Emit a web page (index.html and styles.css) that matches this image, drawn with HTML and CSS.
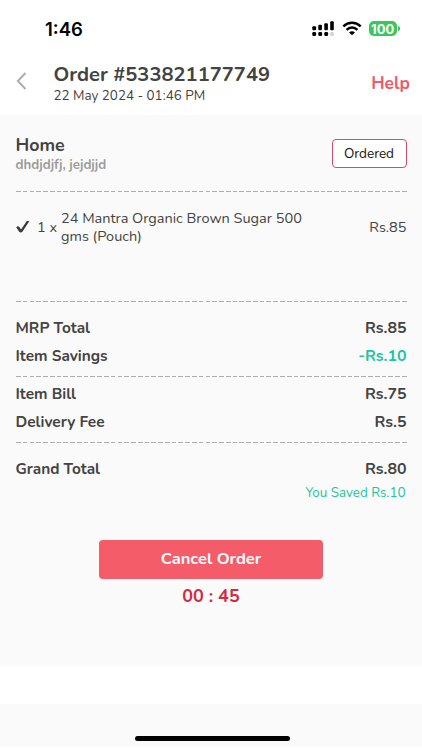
FILE: index.html
```
<!DOCTYPE html>
<html lang="en">
<head>
<meta charset="utf-8">
<title>Order details</title>
<link rel="stylesheet" href="styles.css">
</head>
<body>
<div class="screen">
  <div class="status">
    <span class="clock">1:46</span>
    <div class="indicators">
      <svg class="signal" width="23" height="16" viewBox="0 0 23 16">
        <g fill="#000">
          <rect x="0.3" y="5.2" width="3.8" height="4" rx="1"/>
          <rect x="6.3" y="3.8" width="3.6" height="5.4" rx="1"/>
          <rect x="12.3" y="2.2" width="3.6" height="7" rx="1"/>
          <rect x="18.2" y="0.2" width="3.6" height="9" rx="1"/>
          <rect x="0.3" y="11" width="3.8" height="4" rx="1.2"/>
          <rect x="6.3" y="11" width="3.8" height="4" rx="1.2"/>
          <rect x="12.3" y="11" width="3.8" height="4" rx="1.2"/>
        </g>
        <rect x="18.2" y="11" width="3.6" height="4" rx="1.2" fill="#d2d2d2"/>
      </svg>
      <svg class="wifi" width="20" height="15" viewBox="0 0 20 15">
        <g fill="none" stroke="#000" stroke-width="2.5">
          <path d="M1.3 5.4Q5.2 1.8 10 1.8T18.7 5.4"/>
          <path d="M4.5 8.8Q7 6.5 10 6.5T15.5 8.8"/>
        </g>
        <path d="M7 11.4Q10 9 13 11.4L10 14.3Z" fill="#000"/>
      </svg>
      <div class="battery"><span class="level">100</span><span class="cap"></span></div>
    </div>
  </div>

  <header class="header">
    <svg class="back" width="12" height="18" viewBox="0 0 12 18"><path d="M9.5 1L1.8 9L9.5 17" fill="none" stroke="#adadad" stroke-width="2"/></svg>
    <div class="heading">
      <h1 class="title">Order #533821177749</h1>
      <p class="date">22 May 2024 - 01:46 PM</p>
    </div>
    <a class="help">Help</a>
  </header>

  <main class="content">
    <section class="address">
      <div>
        <h2 class="place">Home</h2>
        <p class="street">dhdjdjfj, jejdjjd</p>
      </div>
      <span class="badge">Ordered</span>
    </section>
    <div class="dash"></div>

    <section class="item">
      <svg class="check" width="14" height="13" viewBox="0 0 14 13"><path d="M0.2 7.2Q1.8 5.4 3.2 6.8L5 9.4L10.8 0.9H13.4L6.6 11.4Q4.7 13.3 3 11.5Z" fill="#3a3a3a"/></svg>
      <span class="qty">1 x</span>
      <p class="name">24 Mantra Organic Brown Sugar 500<br>gms (Pouch)</p>
      <span class="price">Rs.85</span>
    </section>
    <div class="dash"></div>

    <dl class="rows rows-first">
      <div class="row"><dt>MRP Total</dt><dd>Rs.85</dd></div>
      <div class="row"><dt>Item Savings</dt><dd class="saving">-Rs.10</dd></div>
    </dl>
    <div class="dash"></div>
    <dl class="rows rows-second">
      <div class="row"><dt>Item Bill</dt><dd>Rs.75</dd></div>
      <div class="row"><dt>Delivery Fee</dt><dd>Rs.5</dd></div>
    </dl>
    <div class="dash"></div>
    <dl class="rows rows-total">
      <div class="row"><dt>Grand Total</dt><dd>Rs.80</dd></div>
    </dl>
    <p class="saved">You Saved Rs.10</p>

    <button class="cancel">Cancel Order</button>
    <p class="timer">00 : 45</p>
  </main>

  <footer class="footer"><span class="home-bar"></span></footer>
</div>
</body>
</html>
```
FILE: styles.css
```
* { box-sizing: border-box; margin: 0; padding: 0; }

body {
  background: #fff;
  color: #434343;
  font-family: Nunito, Lato, sans-serif;
}

.screen { width: 422px; height: 750px; overflow: hidden; }

.status {
  display: flex;
  justify-content: space-between;
  height: 58px;
  padding: 17.5px 22.5px 0 45px;
}
.clock {
  color: #000;
  font: 600 18.5px/22px Inter, sans-serif;
}
.indicators { display: flex; align-items: flex-start; padding-top: 2px; }
.signal { margin: 1px 7px 0 -1px; }
.wifi { margin: 1px 7px 0 0; }
.battery { display: flex; align-items: center; margin-top: 1px; }
.level {
  width: 28.5px;
  height: 15.5px;
  border-radius: 5px;
  background: #3ac759;
  color: #fff;
  font: 700 13px/16px Inter, sans-serif;
  letter-spacing: 0.1px;
  text-align: center;
}
.cap { width: 2px; height: 5px; margin-left: 0.5px; border-radius: 0 2px 2px 0; background: #3ac759; }

.header {
  display: flex;
  height: 57px;
  padding: 4px 12px 0 16px;
}
.back { margin-top: 10px; }
.heading { flex: 1; margin-left: 25.5px; }
.title { font-size: 20.1px; line-height: 24px; padding-top: 1px; }
.date { font-size: 13.4px; line-height: 18px; }
.help { padding-top: 9px; color: #ee5a69; font-size: 17.4px; line-height: 24px; font-weight: 700; }

.content {
  height: 551px;
  padding: 20px 15.5px 0;
  background: #fafafa;
}

.address { display: flex; justify-content: space-between; height: 56px; }
.place { font-size: 17.8px; line-height: 20px; }
.street { padding-top: 1px; font-size: 13.3px; line-height: 18px; font-weight: 700; color: #9c9c9c; }
.badge {
  width: 75px;
  height: 29px;
  margin-top: 4px;
  border: 1.5px solid #dc4a61;
  border-radius: 4px;
  background: #fff;
  color: #111;
  font-size: 13.5px;
  line-height: 28px;
  text-align: center;
}

.dash {
  height: 1px;
  background: repeating-linear-gradient(90deg, #aeaeae 0 4.7px, transparent 4.7px 6.77px);
}

.item {
  display: flex;
  height: 109px;
  padding-top: 17px;
  font-size: 14.5px;
  line-height: 18px;
}
.check { margin: 11px 7px 0 0.5px; }
.qty { width: 24px; padding-top: 9px; }
.name { flex: 1; }
.price { padding-top: 9px; }

.rows { font-size: 15.4px; font-weight: 700; }
.rows-first { height: 74px; padding-top: 11.5px; }
.rows-second { height: 65px; padding-top: 2.5px; }
.rows-total { padding-top: 11.5px; }
.row { display: flex; justify-content: space-between; line-height: 28px; }
.row dd { font-size: 15.9px; }
.row .saving { color: #20c5a0; }

.saved { padding-top: 1px; color: #20c5a0; font-size: 13.4px; line-height: 18px; text-align: right; margin-right: 1px; }

.cancel {
  display: block;
  width: 224px;
  height: 39px;
  margin: 38.5px 0 0 83.5px;
  padding-bottom: 3px;
  border: 0;
  border-radius: 4px;
  background: #f55c6a;
  color: #fff;
  font: 700 16.5px Nunito, Lato, sans-serif;
}
.timer { margin-top: 5px; color: #d52a44; font-size: 18px; line-height: 24px; font-weight: 700; text-align: center; }

.footer {
  display: flex;
  justify-content: center;
  height: 43px;
  margin-top: 38px;
  padding-top: 32px;
  background: #fafafa;
}
.home-bar { width: 155px; height: 5px; margin-left: 3px; border-radius: 3px; background: #000; }
```
